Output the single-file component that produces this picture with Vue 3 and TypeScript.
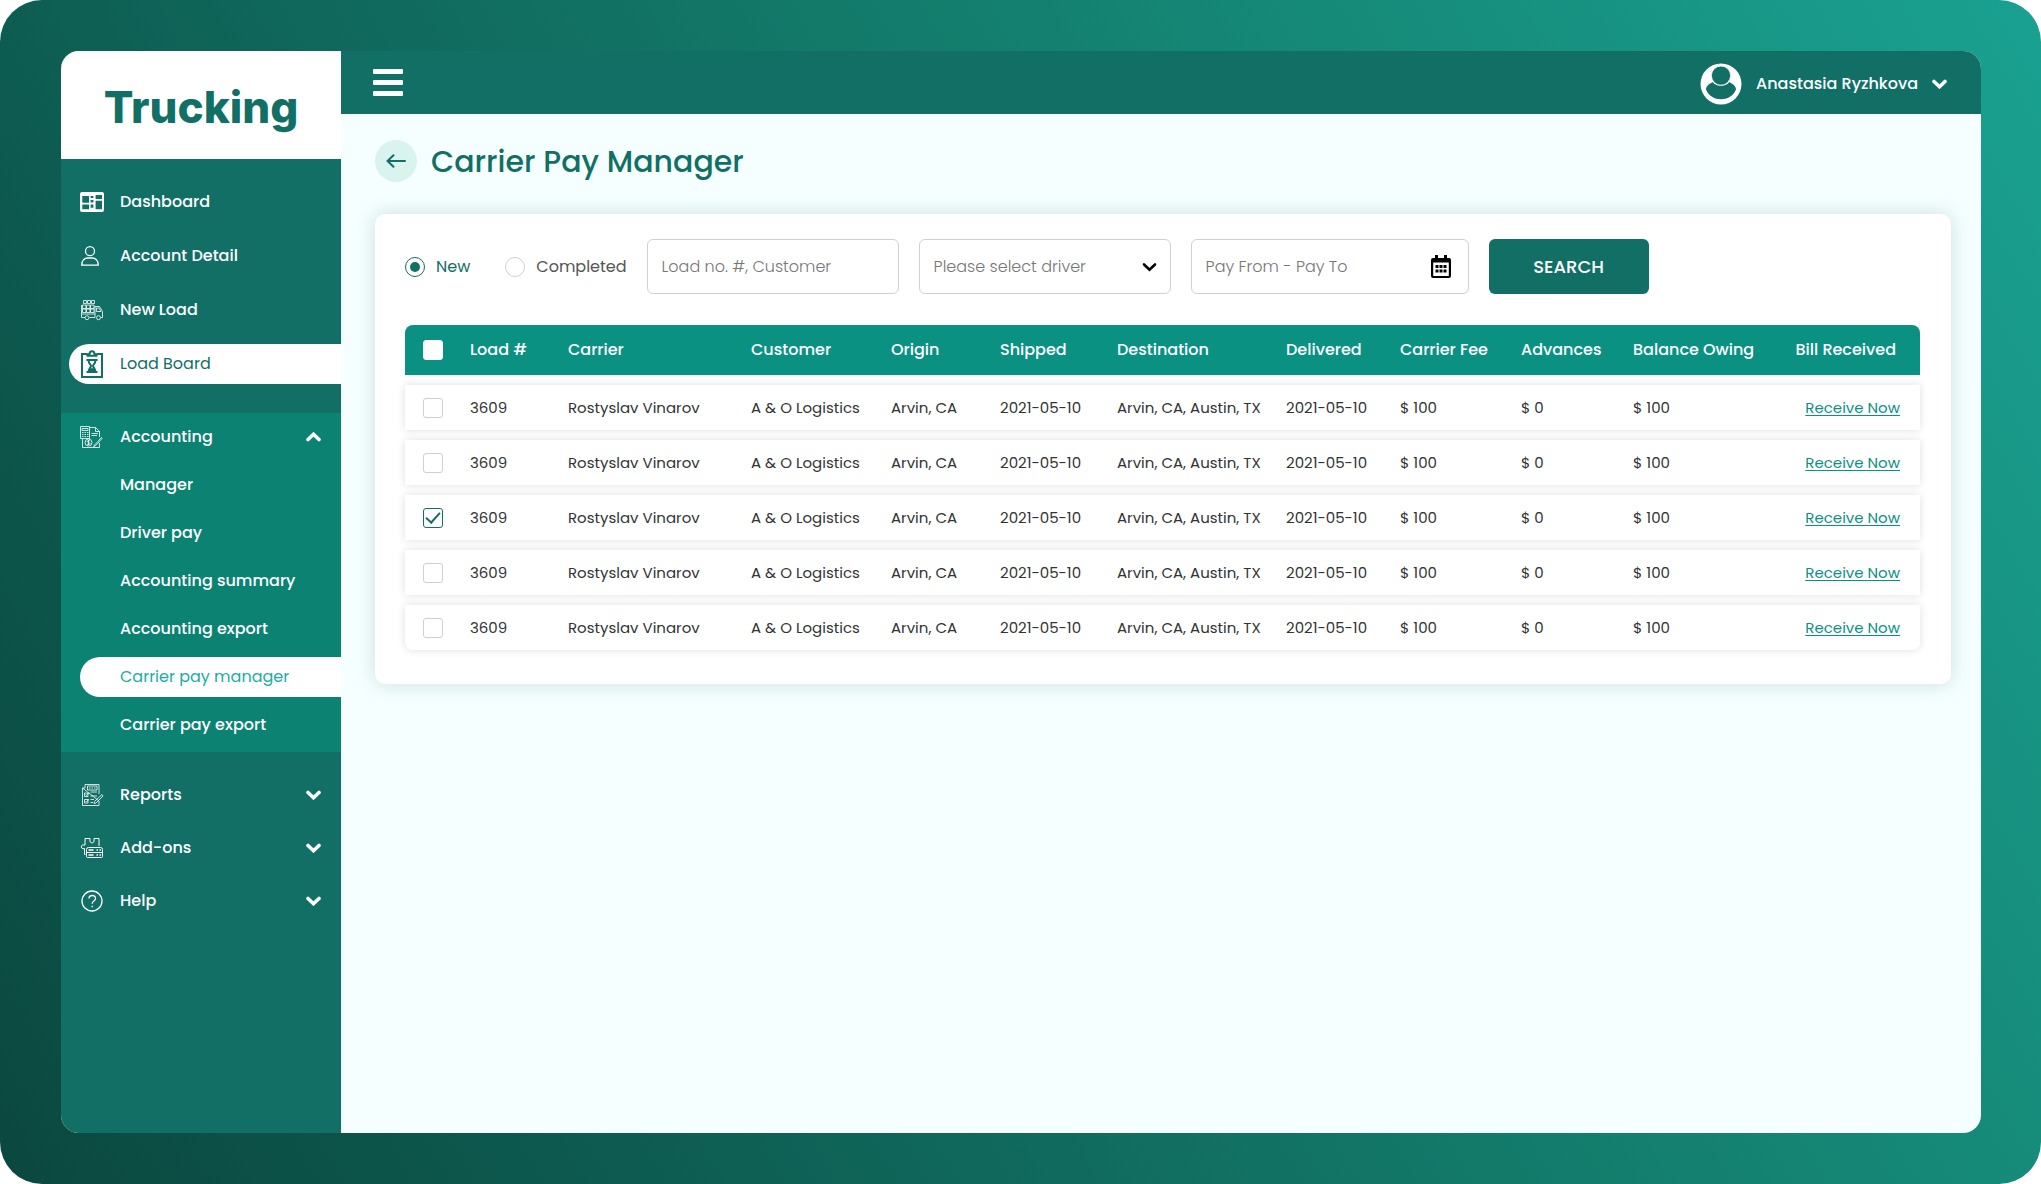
<script setup lang="ts">
import { ref } from 'vue'

interface NavItem {
  label: string
  icon: string
}

interface Load {
  number: string
  carrier: string
  customer: string
  origin: string
  shipped: string
  destination: string
  delivered: string
  fee: string
  advances: string
  balance: string
  selected: boolean
}

const mainNav: NavItem[] = [
  { label: 'Dashboard', icon: 'dashboard' },
  { label: 'Account Detail', icon: 'person' },
  { label: 'New Load', icon: 'truck' },
  { label: 'Load Board', icon: 'board' },
]
const accountingNav: string[] = [
  'Manager',
  'Driver pay',
  'Accounting summary',
  'Accounting export',
  'Carrier pay manager',
  'Carrier pay export',
]
const moreNav: NavItem[] = [
  { label: 'Reports', icon: 'reports' },
  { label: 'Add-ons', icon: 'addons' },
  { label: 'Help', icon: 'help' },
]

const activeMain = ref('Load Board')
const activeAccounting = ref('Carrier pay manager')
const accountingOpen = ref(true)

const status = ref('new')
const search = ref('')
const driver = ref('')
const period = ref('')

const columns: string[] = [
  'Load #',
  'Carrier',
  'Customer',
  'Origin',
  'Shipped',
  'Destination',
  'Delivered',
  'Carrier Fee',
  'Advances',
  'Balance Owing',
  'Bill Received',
]

const loads = ref<Load[]>(
  Array.from({ length: 5 }, (_, i) => ({
    number: '3609',
    carrier: 'Rostyslav Vinarov',
    customer: 'A & O Logistics',
    origin: 'Arvin, CA',
    shipped: '2021-05-10',
    destination: 'Arvin, CA, Austin, TX',
    delivered: '2021-05-10',
    fee: '$ 100',
    advances: '$ 0',
    balance: '$ 100',
    selected: i === 2,
  })),
)

function toggleAll(event: Event) {
  const checked = (event.target as HTMLInputElement).checked
  loads.value.forEach((load) => (load.selected = checked))
}
</script>

<template>
  <div class="frame">
    <div class="window">
      <aside class="sidebar">
        <div class="logo">Trucking</div>

        <nav class="nav" aria-label="Main">
          <div class="group">
            <a
              v-for="item in mainNav"
              :key="item.label"
              href="#"
              class="item"
              :class="{ active: item.label === activeMain }"
              @click.prevent="activeMain = item.label"
            >
              <span class="icon">
                <svg v-if="item.icon === 'dashboard'" width="24" height="20" viewBox="0 0 24 20">
                  <path
                    fill="currentColor"
                    fill-rule="evenodd"
                    d="M2 0h20a2 2 0 0 1 2 2v16a2 2 0 0 1-2 2H2a2 2 0 0 1-2-2V2a2 2 0 0 1 2-2zM2.300 4v6.800H9V4zM2.300 12.600v4.700H9v-4.700zM10.600 4v2h2.800V4zM10.600 8v2.500h2.800V8zM10.600 12.600v3.200h2.800v-3.200zM15.600 3v4H22V3zM15.600 8.800v8.400H22V8.800z"
                  />
                </svg>
                <svg v-else-if="item.icon === 'person'" class="line" width="24" height="20" viewBox="0 0 24 20">
                  <circle cx="10" cy="5.200" r="4.500" />
                  <path d="M1.700 19.200c0-5 3-7.200 6-7.200h4.600c3 0 6 2.200 6 7.200z" />
                </svg>
                <svg v-else-if="item.icon === 'truck'" class="line thin" width="24" height="22" viewBox="0 0 24 22">
                  <path
                    d="M3.500 1.500h3v3h-3zM7.500 1.500h3v3h-3zM11.500 1.500h3v3h-3zM2.500 6h3.500v3.500H2.500zM6.500 6H10v3.500H6.500zM10.500 6H14v3.500h-3.500zM2.500 10h3.500v3.500H2.500zM6.500 10H10v3.500H6.500zM10.500 10H14v3.500h-3.500zM1.500 6v12.500H5M15 7v11.500H9.500M1.500 15H15M15 7.500h4.500l3 5v6H21M16.500 9h2.500l2 3.500h-4.500z"
                  />
                  <circle cx="7" cy="18.700" r="2" />
                  <circle cx="18.500" cy="18.700" r="2" />
                </svg>
                <svg v-else class="line bold" width="24" height="28" viewBox="0 0 24 28">
                  <path
                    d="M7 4H2v23h20V4h-5M7.500 5.700V4.200h2c0-4 5-4 5 0h2v1.500zM6.500 10h11M6.500 22h11M8.500 10c0 4 2.500 4.500 2.500 6s-2.500 2-2.500 6M15.500 10c0 4-2.500 4.500-2.500 6s2.500 2 2.500 6M10 20.500l2-1.500 2 1.500"
                  />
                </svg>
              </span>
              {{ item.label }}
            </a>
          </div>

          <div class="accounting">
            <button type="button" class="item head" :aria-expanded="accountingOpen" @click="accountingOpen = !accountingOpen">
              <span class="icon">
                <svg class="line thin" width="24" height="24" viewBox="0 0 24 24">
                  <path
                    d="M.5 1.500h9v12h-9zM2 3.500h6v2H2zM2 7.500h1.500M4.500 7.500H6M7 7.500h1.500M2 9.500h1.500M4.500 9.500H6M7 9.500h1.500M2 11.500h1.500M4.500 11.500H6M7 11.500h1.500M9.500 2.500h6l4 4V12M15.500 2.500v4h4M11.500 8.500H18M11.500 10.500H17M2.500 13.500v9h17V18M21.500 12.500l-6.500 7-1.500 2 2.300-1 6.200-7z"
                  />
                  <circle cx="8.500" cy="17.500" r="3.500" />
                  <path d="M10 16c-1-1-3-.5-2.700.7.300 1 2.500.6 2.700 1.700.200 1.200-2 1.600-3 .5M8.500 15v5" />
                </svg>
              </span>
              Accounting
              <svg class="chevron up" width="15" height="10" viewBox="0 0 15 10"><path d="M2 2.500 7.500 7.700 13 2.500" /></svg>
            </button>
            <template v-if="accountingOpen">
              <a
                v-for="label in accountingNav"
                :key="label"
                href="#"
                class="sub"
                :class="{ active: label === activeAccounting }"
                @click.prevent="activeAccounting = label"
              >{{ label }}</a>
            </template>
          </div>

          <div class="group more">
            <button v-for="item in moreNav" :key="item.label" type="button" class="item">
              <span class="icon">
                <svg v-if="item.icon === 'reports'" class="line thin" width="24" height="24" viewBox="0 0 24 24">
                  <path
                    d="M5 1.500h14V11M19 18v4.500H2.500V5zM5 1.500V5H2.500M7.500 3h9.500v4H7.500zM9 5h1.500M11.500 5H13M14 5h1.500M10.500 9H17M10.500 13H17M10.500 16.500H14M10.500 19.500H13M4.500 10h3.500v3.500H4.500zM4.500 16.500h3.500V20H4.500zM5.500 11.500l1 1L9 9.500M5.500 18l1 1L9 16M22 11.500l1 1.500-7 7-2 .5.500-2z"
                  />
                </svg>
                <svg v-else-if="item.icon === 'addons'" class="line fine" width="24" height="22" viewBox="0 0 24 22">
                  <path
                    d="M5.500 17.500H4.500v-6c-3.500 1.500-4.500-4-1-3.500h1.500V1.500H10v2.500c0 2.500 4 2.500 4 0V1.500H19V9M8.500 10.500h12a2 2 0 0 1 2 2v7a1 1 0 0 1-1 1h-14a1 1 0 0 1-1-1v-7a2 2 0 0 1 2-2zM6.500 15.500h16"
                  />
                  <path class="dots" d="M8.500 13h5M16.500 13H18M19.500 13H21M8.500 18h5M16.500 18H18M19.500 18H21" />
                </svg>
                <svg v-else class="line" width="24" height="22" viewBox="0 0 24 22">
                  <circle cx="12" cy="11" r="10" />
                  <path d="M9 8.500c0-4 6.500-4 6.500 0 0 2.500-3.300 2.500-3.300 5.200M12.200 15.800v1.400" />
                </svg>
              </span>
              {{ item.label }}
              <svg class="chevron" width="15" height="10" viewBox="0 0 15 10"><path d="M2 2.500 7.500 7.700 13 2.500" /></svg>
            </button>
          </div>
        </nav>
      </aside>

      <div class="main">
        <header class="topbar">
          <button type="button" class="burger" aria-label="Toggle menu"><i></i><i></i><i></i></button>
          <button type="button" class="user">
            <svg width="42" height="42" viewBox="0 0 42 42">
              <circle cx="21" cy="21" r="20.500" fill="#fff" />
              <path d="M13 19c2 5 14 5 16 0 4 1.500 7 4.500 7 7.500-5 13-25 13-30 0 0-3 3-6 7-7.500z" fill="#116f66" />
              <circle cx="21" cy="12.600" r="9.600" fill="#116f66" stroke="#fff" stroke-width=".8" />
            </svg>
            <span>Anastasia Ryzhkova</span>
            <svg class="chevron" width="15" height="10" viewBox="0 0 15 10"><path d="M2 2.500 7.500 7.700 13 2.500" /></svg>
          </button>
        </header>

        <main class="content">
          <div class="heading">
            <a href="#" class="back" aria-label="Back">
              <svg width="20" height="14" viewBox="0 0 20 14"><path d="M19 7H2M7.500 1.200 1.500 7l6 5.800" /></svg>
            </a>
            <h1>Carrier Pay Manager</h1>
          </div>

          <section class="card">
            <form class="filters" @submit.prevent>
              <div class="radios">
                <label class="radio"><input v-model="status" type="radio" name="status" value="new" /><span>New</span></label>
                <label class="radio"><input v-model="status" type="radio" name="status" value="completed" /><span>Completed</span></label>
              </div>
              <div class="field">
                <input v-model="search" type="text" placeholder="Load no. #, Customer" aria-label="Load number or customer" />
              </div>
              <div class="field">
                <select v-model="driver" aria-label="Driver">
                  <option value="">Please select driver</option>
                </select>
                <svg class="chevron" width="15" height="10" viewBox="0 0 15 10"><path d="M2 2.500 7.500 7.700 13 2.500" /></svg>
              </div>
              <div class="field wide">
                <input v-model="period" type="text" placeholder="Pay From - Pay To" aria-label="Pay period" />
                <svg class="calendar" width="20" height="24" viewBox="0 0 20 24">
                  <path
                    fill-rule="evenodd"
                    d="M4 0h3v3h6V0h3v3h2a2 2 0 0 1 2 2v16a2 2 0 0 1-2 2H2a2 2 0 0 1-2-2V5a2 2 0 0 1 2-2h2zM2.200 7.500V21h15.600V7.500zM4.500 10h3v3h-3zM8.500 10h3v3h-3zM12.500 10h3v3h-3zM4.500 14.500h3v3h-3zM8.500 14.500h3v3h-3zM12.500 14.500h3v3h-3z"
                  />
                </svg>
              </div>
              <button type="submit" class="search">SEARCH</button>
            </form>

            <table class="loads">
              <colgroup>
                <col class="c-check" />
                <col class="c-load" />
                <col class="c-carrier" />
                <col class="c-customer" />
                <col class="c-origin" />
                <col class="c-shipped" />
                <col class="c-destination" />
                <col class="c-delivered" />
                <col class="c-fee" />
                <col class="c-advances" />
                <col class="c-balance" />
                <col class="c-bill" />
              </colgroup>
              <thead>
                <tr>
                  <th scope="col"><input type="checkbox" aria-label="Select all loads" @change="toggleAll" /></th>
                  <th v-for="column in columns" :key="column" scope="col">{{ column }}</th>
                </tr>
              </thead>
              <tbody>
                <tr v-for="(load, index) in loads" :key="index">
                  <td><input v-model="load.selected" type="checkbox" :aria-label="`Select load ${index + 1}`" /></td>
                  <td>{{ load.number }}</td>
                  <td>{{ load.carrier }}</td>
                  <td>{{ load.customer }}</td>
                  <td>{{ load.origin }}</td>
                  <td>{{ load.shipped }}</td>
                  <td>{{ load.destination }}</td>
                  <td>{{ load.delivered }}</td>
                  <td>{{ load.fee }}</td>
                  <td>{{ load.advances }}</td>
                  <td>{{ load.balance }}</td>
                  <td><a href="#">Receive Now</a></td>
                </tr>
              </tbody>
            </table>
          </section>
        </main>
      </div>
    </div>
  </div>
</template>

<style>
body {
  margin: 0;
  background: #fff;
}
</style>

<style scoped>
.frame,
.frame * {
  box-sizing: border-box;
}
.frame {
  display: flex;
  min-height: 100vh;
  padding: 51px 60px 51px 61px;
  border-radius: 42px;
  background: linear-gradient(60deg, #0b483f 0%, #0d5a50 22%, #14806f 62%, #1aa191 100%);
  font-family: Poppins, Inter, sans-serif;
  font-size: 16px;
  line-height: 24px;
}
button,
input,
select {
  font: inherit;
}
button {
  border: 0;
  cursor: pointer;
}
.window {
  display: flex;
  flex: 1;
  min-width: 0;
  border-radius: 18px;
  overflow: hidden;
  background: #f5ffff;
}

/* Sidebar */
.sidebar {
  flex: none;
  width: 280px;
  background: #116f66;
  color: #fff;
}
.logo {
  height: 108px;
  padding-top: 4px;
  display: flex;
  align-items: center;
  justify-content: center;
  background: #fff;
  color: #116f66;
  font-family: Inter, sans-serif;
  font-size: 44px;
  line-height: 56px;
  font-weight: 800;
}
.group {
  padding: 16px 0 22px;
}
.item {
  display: flex;
  align-items: center;
  width: 100%;
  height: 40px;
  padding: 0 20px 0 19px;
  background: none;
  color: #fff;
  font-weight: 500;
  text-align: left;
  text-decoration: none;
}
.group .item {
  margin: 7px 0 14px;
}
.group .item:last-child {
  margin-bottom: 7px;
}
.icon {
  display: flex;
  width: 24px;
  margin-right: 16px;
}
.group .item.active {
  width: auto;
  margin-left: 8px;
  padding-left: 11px;
  border-radius: 20px 0 0 20px;
  background: #fff;
  color: #116f66;
  font-weight: 400;
}
.line {
  fill: none;
  stroke: currentColor;
  stroke-width: 1.3;
}
.line.fine {
  stroke-width: 1;
}
.line .dots {
  stroke-width: 1.6;
}
.line.thin {
  stroke-width: 0.8;
}
.line.bold {
  stroke-width: 2;
}
.chevron {
  flex: none;
  fill: none;
  stroke: currentColor;
  stroke-width: 3.6;
  stroke-linecap: round;
}
.item .chevron {
  margin-left: auto;
}
.chevron.up {
  transform: rotate(180deg);
}
.accounting {
  display: flex;
  flex-direction: column;
  gap: 8px;
  padding: 4px 0 7px;
  background: #0b8272;
}
.item.head {
  height: 40px;
}
.sub {
  margin-left: 19px;
  padding-left: 40px;
  border-radius: 20px 0 0 20px;
  color: #fff;
  font-weight: 500;
  line-height: 40px;
  text-decoration: none;
}
.sub.active {
  background: #fff;
  color: #1aae9f;
}
.sub.active {
  font-weight: 400;
}
.group.more .item {
  margin-bottom: 13px;
}

/* Top bar */
.main {
  flex: 1;
  min-width: 0;
}
.topbar {
  display: flex;
  align-items: center;
  justify-content: space-between;
  height: 63px;
  padding: 0 34px 0 32px;
  background: #116f66;
}
.burger {
  display: grid;
  gap: 6px;
  width: 30px;
  padding: 0;
  background: none;
}
.burger i {
  height: 5px;
  border-radius: 1px;
  background: #fff;
}
.user {
  display: flex;
  align-items: center;
  gap: 14px;
  padding: 3px 0 0;
  background: none;
  color: #fff;
  font-weight: 500;
}

/* Page */
.content {
  padding: 26px 30px 40px 34px;
}
.heading {
  display: flex;
  align-items: center;
  gap: 14px;
  margin-bottom: 32px;
}
.back {
  display: grid;
  place-items: center;
  width: 42px;
  height: 42px;
  border-radius: 50%;
  background: #d9f3ee;
}
.back path {
  fill: none;
  stroke: #116f66;
  stroke-width: 2;
  stroke-linecap: round;
}
h1 {
  margin: 0;
  padding-top: 2px;
  color: #116f66;
  font-size: 30px;
  line-height: 40px;
  font-weight: 500;
}
.card {
  padding: 25px 31px 24px 30px;
  border-radius: 10px;
  background: #fff;
  box-shadow: 0 0 20px rgba(17, 80, 70, 0.18);
}
.filters {
  display: flex;
  align-items: center;
  flex-wrap: wrap;
  gap: 20px;
  margin-bottom: 21px;
}
.radios {
  display: flex;
  gap: 35px;
}
.radio {
  display: flex;
  align-items: center;
  gap: 11px;
  color: #555;
}
.radio:has(:checked) {
  color: #116f66;
}
input[type='radio'],
input[type='checkbox'] {
  appearance: none;
  display: grid;
  place-content: center;
  width: 20px;
  height: 20px;
  margin: 0;
  border: 1px solid #d0d0d0;
  background: #fff;
}
input[type='radio'] {
  border-radius: 50%;
}
input[type='checkbox'] {
  border-radius: 3px;
}
input[type='radio']:checked,
input[type='checkbox']:checked {
  border-color: #116f66;
}
input[type='radio']:checked::after {
  content: '';
  width: 10px;
  height: 10px;
  border-radius: 50%;
  background: #116f66;
}
input[type='checkbox']:checked::after {
  content: '';
  width: 6px;
  height: 12px;
  margin-bottom: 3px;
  border: solid #116f66;
  border-width: 0 2px 2px 0;
  transform: rotate(42deg);
}
.field {
  position: relative;
  width: 252px;
}
.field.wide {
  width: 278px;
}
.field input,
.field select {
  display: block;
  width: 100%;
  height: 55px;
  padding: 0 14px;
  border: 1px solid #d0d0d0;
  border-radius: 6px;
  background: #fff;
  color: #777;
  font-weight: 300;
  appearance: none;
}
.field input::placeholder {
  color: #777;
  opacity: 1;
}
.field svg {
  position: absolute;
  top: 50%;
  transform: translateY(-50%);
  pointer-events: none;
}
.field .chevron {
  right: 14px;
  color: #000;
  stroke-width: 2.6;
}
.field .calendar {
  right: 18px;
}
.search {
  width: 160px;
  height: 55px;
  border-radius: 6px;
  background: #116f66;
  color: #fff;
  font-size: 18px;
  font-weight: 500;
}

/* Loads table */
.loads {
  width: 100%;
  table-layout: fixed;
  border-collapse: separate;
  border-spacing: 0 10px;
  color: #333;
}
.c-check { width: 65px; }
.c-load { width: 98px; }
.c-carrier { width: 183px; }
.c-customer { width: 140px; }
.c-origin { width: 109px; }
.c-shipped { width: 117px; }
.c-destination { width: 169px; }
.c-delivered { width: 114px; }
.c-fee { width: 121px; }
.c-advances { width: 112px; }
.c-balance { width: 162px; }
.c-bill { width: 125px; }
th,
td {
  padding: 0;
  text-align: left;
  white-space: nowrap;
}
th {
  height: 50px;
  background: #0a9182;
  color: #fff;
  font-weight: 500;
}
th:first-child {
  padding-left: 18px;
  border-top-left-radius: 8px;
}
th:last-child {
  padding-right: 24px;
  border-top-right-radius: 8px;
  text-align: right;
}
th input[type='checkbox'] {
  border-color: #fff;
}
tbody tr {
  box-shadow: 0 0 8px rgba(0, 0, 0, 0.13);
}
td {
  height: 45px;
  background: #fff;
  font-size: 15px;
  font-weight: 400;
}
td:first-child {
  padding-left: 18px;
}
td:last-child {
  padding-right: 20px;
  text-align: right;
}
tbody tr:last-child,
tbody tr:last-child td:first-child {
  border-bottom-left-radius: 8px;
}
tbody tr:last-child,
tbody tr:last-child td:last-child {
  border-bottom-right-radius: 8px;
}
td a {
  color: #0a9182;
  text-underline-offset: 2px;
}
</style>
